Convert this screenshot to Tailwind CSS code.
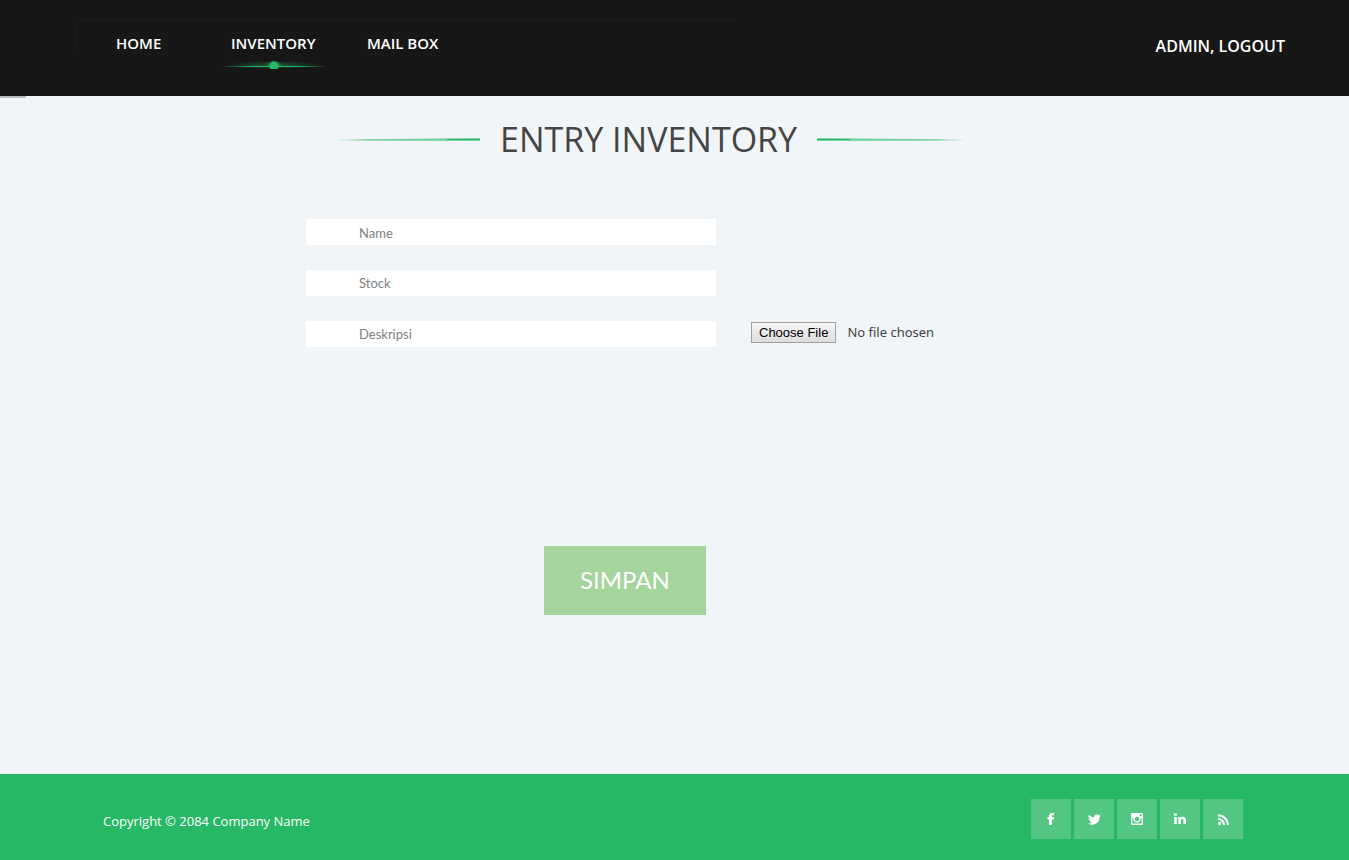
<!DOCTYPE html>
<html lang="id">
<head>
<meta charset="utf-8">
<meta name="viewport" content="width=device-width, initial-scale=1">
<title>Entry Inventory</title>
<script src="https://cdn.jsdelivr.net/npm/@tailwindcss/browser@4"></script>
</head>
<body class="flex min-h-screen flex-col bg-[#f1f5f8] font-['Open_Sans',sans-serif]">
<header class="relative flex h-24 items-start justify-between bg-[#171717] pr-16 pl-[116px] text-[15px] leading-5 font-semibold text-white">
  <div class="absolute top-5 left-[75px] h-8 w-[49%] border-t border-l border-[#1e1e1e]"></div>
  <nav class="relative flex pt-[33px]">
    <a href="#" class="w-[115px]">HOME</a>
    <a href="#" class="relative w-[136px]" aria-current="page">INVENTORY
      <svg class="absolute top-6 -left-3 h-4 w-[110px]" viewBox="0 0 110 16" aria-hidden="true">
        <defs>
          <linearGradient id="beam"><stop offset="0" stop-color="#27b866" stop-opacity="0"/><stop offset=".3" stop-color="#27b866"/><stop offset=".7" stop-color="#27b866"/><stop offset="1" stop-color="#27b866" stop-opacity="0"/></linearGradient>
          <radialGradient id="glow"><stop offset="0" stop-color="#27b866" stop-opacity=".8"/><stop offset="1" stop-color="#27b866" stop-opacity="0"/></radialGradient>
        </defs>
        <path d="M8 12V4h94v8z" fill="url(#glow)" opacity=".5"/>
        <rect x="1" y="9" width="108" height="1" fill="url(#beam)"/>
        <path d="M46 12a9 9 0 1 1 18 0z" fill="url(#glow)"/>
        <path d="M51.500 12a4.500 4.500 0 1 1 7 0z" fill="#27b866"/>
      </svg>
    </a>
    <a href="#">MAIL BOX</a>
  </nav>
  <a href="#" class="pt-9 text-base leading-5">ADMIN, LOGOUT</a>
</header>
<main class="grow">
  <div class="h-0.5 w-[26px] bg-[#b9bbbe]"></div>
  <div class="flex items-center gap-5 pt-[17px] pl-[336px] text-[#444]">
    <svg class="h-1 w-36" viewBox="0 0 144 4" aria-hidden="true"><defs><linearGradient id="fadeIn"><stop offset="0" stop-color="#27b866" stop-opacity="0"/><stop offset=".2" stop-color="#27b866" stop-opacity=".6"/><stop offset="1" stop-color="#27b866" stop-opacity=".6"/></linearGradient></defs><path d="M0 2.500L144 1V4L0 3.500z" fill="url(#fadeIn)"/><path d="M111 2h33v1h-33z" fill="#27b866"/></svg>
    <h1 class="text-[34px] leading-[48px] font-normal whitespace-nowrap">ENTRY INVENTORY</h1>
    <svg class="h-1 w-[150px]" viewBox="0 0 150 4" aria-hidden="true"><defs><linearGradient id="fadeOut"><stop offset="0" stop-color="#27b866" stop-opacity=".6"/><stop offset=".8" stop-color="#27b866" stop-opacity=".6"/><stop offset="1" stop-color="#27b866" stop-opacity="0"/></linearGradient></defs><path d="M0 1L150 2.500V3.500L0 4z" fill="url(#fadeOut)"/><path d="M0 2h33v1H0z" fill="#27b866"/></svg>
  </div>
  <form class="pt-14 pl-[306px] font-['Lato',sans-serif] text-[13px]">
    <div class="flex items-end gap-[35px]">
      <div class="flex w-[410px] flex-col gap-[25px]">
        <input aria-label="Name" placeholder="Name" class="h-[26px] bg-white pt-0.5 pl-[53px] placeholder:text-[#808080]">
        <input aria-label="Stock" placeholder="Stock" class="h-[26px] bg-white pl-[53px] placeholder:text-[#808080]">
        <input aria-label="Deskripsi" placeholder="Deskripsi" class="h-[26px] bg-white pl-[53px] placeholder:text-[#808080]">
      </div>
      <input type="file" aria-label="File" class="mb-1 h-[21px] w-60 font-['Noto_Sans'] text-[13px] leading-[21px] text-[#444] file:mr-[11px] file:h-[21px] file:border file:border-solid file:border-[#a0a0a0] file:bg-linear-to-b file:from-[#f6f6f6] file:to-[#dddddd] file:px-[7px] file:font-['Liberation_Sans'] file:text-[13px] file:leading-[19px] file:text-black">
    </div>
    <button type="submit" class="mt-[199px] ml-[238px] h-[69px] w-[162px] bg-[#a5d49d] pb-0.5 text-2xl text-white">SIMPAN</button>
  </form>
</main>
<footer class="flex h-[86px] items-center justify-between bg-[#27b866] pr-[106px] pl-[103px] text-white">
  <p class="pt-2 text-[13px] leading-5 font-medium">Copyright © 2084 Company Name</p>
  <div class="flex gap-[3px] pt-1">
    <a href="#" aria-label="Facebook" class="flex size-10 items-center justify-center bg-[#53c683]"><svg class="size-3" viewBox="0 0 12 12" fill="currentColor"><path d="M4 12V6.500H2.500V4H4V3C4 1 5 0 7 0h2v2.300H8C7 2.300 6.900 2.600 6.900 3.200V4H9l-.3 2.500H6.900V12z"/></svg></a>
    <a href="#" aria-label="Twitter" class="flex size-10 items-center justify-center bg-[#53c683]"><svg class="size-[13px]" viewBox="0 0 24 24" fill="currentColor"><path d="M24 4.600a10 10 0 0 1-2.800.8 5 5 0 0 0 2.100-2.700 10 10 0 0 1-3.100 1.200 4.900 4.900 0 0 0-8.400 4.500A14 14 0 0 1 1.700 3.200a4.900 4.900 0 0 0 1.500 6.500 5 5 0 0 1-2.200-.6 4.900 4.900 0 0 0 3.900 4.900 5 5 0 0 1-2.200.1 4.900 4.900 0 0 0 4.600 3.400A10 10 0 0 1 0 19.500a14 14 0 0 0 21.500-12.400A10 10 0 0 0 24 4.600z"/></svg></a>
    <a href="#" aria-label="Instagram" class="flex size-10 items-center justify-center bg-[#53c683]"><svg class="size-3" viewBox="0 0 12 12" fill="currentColor"><path fill-rule="evenodd" d="M1 0h10a1 1 0 0 1 1 1v10a1 1 0 0 1-1 1H1a1 1 0 0 1-1-1V1a1 1 0 0 1 1-1zM8.800 1.300v1.900h1.900V1.300zM1.400 5v5.600h9.200V5H9.600A3.700 3.700 0 1 1 2.400 5zM6 3.800a2.200 2.200 0 1 0 0 4.400 2.200 2.200 0 0 0 0-4.400z"/></svg></a>
    <a href="#" aria-label="LinkedIn" class="flex size-10 items-center justify-center bg-[#53c683]"><svg class="size-3" viewBox="0 0 12 12" fill="currentColor"><circle cx="1.500" cy="1.500" r="1.500"/><path d="M.2 4h2.600v7H.2zM4.300 4h2.400v1C7.100 4.200 8 3.800 8.900 3.800 11.200 3.800 12 5.200 12 7.200V11H9.400V7.500C9.400 6.500 9.100 5.900 8.300 5.900S6.900 6.600 6.900 7.500V11H4.300z"/></svg></a>
    <a href="#" aria-label="RSS" class="flex size-10 items-center justify-center bg-[#53c683]"><svg class="size-[11px]" viewBox="0 0 11 11" fill="none" stroke="currentColor" stroke-width="2"><circle cx="1.600" cy="9.400" r="1.600" fill="currentColor" stroke="none"/><path d="M0 4.900A6.100 6.100 0 0 1 6.100 11M0 1.200A9.800 9.800 0 0 1 9.800 11"/></svg></a>
  </div>
</footer>
</body>
</html>
